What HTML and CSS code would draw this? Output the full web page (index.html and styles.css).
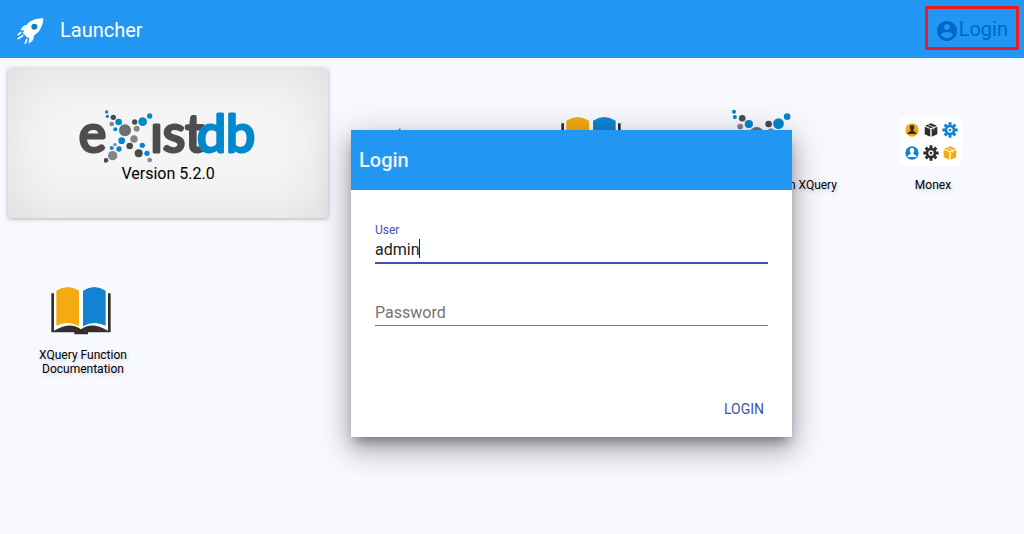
FILE: index.html
```html
<!DOCTYPE html>
<html lang="en">
    <head>
        <meta charset="utf-8">
        <title>Launcher</title>
        <meta name="viewport" content="width=device-width, initial-scale=1.0">
        <link rel="stylesheet" href="styles.css">
    </head>
    <body>
        <!-- shared shapes -->
        <svg class="defs" aria-hidden="true">
            <symbol id="dots" viewBox="133 40 147 165">
                <g fill="#0088cf">
                    <circle cx="141" cy="49" r="5"/><circle cx="143" cy="62" r="5"/><circle cx="177" cy="79" r="10"/>
                    <circle cx="167" cy="101" r="6"/><circle cx="186" cy="135" r="10"/><circle cx="156" cy="157" r="6"/>
                    <circle cx="178" cy="160" r="8"/><circle cx="249" cy="78" r="13"/><circle cx="270" cy="61" r="8"/>
                    <circle cx="248" cy="149" r="8"/><circle cx="262" cy="173" r="8"/>
                </g>
                <g fill="#4a4a4c">
                    <circle cx="161" cy="65" r="8"/><circle cx="225" cy="79" r="8"/><circle cx="210" cy="151" r="10"/>
                    <circle cx="237" cy="173" r="12"/><circle cx="139" cy="194" r="7"/>
                </g>
                <g fill="#858587">
                    <circle cx="156" cy="85" r="7"/><circle cx="231" cy="99" r="9"/><circle cx="223" cy="130" r="11"/>
                    <circle cx="166" cy="147" r="5"/><circle cx="159" cy="180" r="14"/><circle cx="270" cy="193" r="7"/>
                </g>
                <circle cx="196" cy="104" r="18" fill="#6d6e70"/>
            </symbol>
            <symbol id="book" viewBox="90 40 186 165">
                <path fill="#fff" d="M104 64q36-24 74 0h8q38-24 76 0v112q-45-2-79 10-34-12-79-10z"/>
                <path fill="#f4ab11" d="M109 63q34-22 68 0v107q-34-19-68-2z"/>
                <path fill="#1283d1" d="M189 63q34-22 68 0v105q-34-17-68 2z"/>
                <path fill="#332f31" d="M94 71h8v112q50-29 81-4 31-25 81 4V71h8v117h-68v6h-41v-6H94z"/>
            </symbol>
            <symbol id="gear" viewBox="-24 -24 48 48">
                <circle r="12" fill="none" stroke="currentColor" stroke-width="8"/>
                <circle r="4" fill="currentColor"/>
                <path stroke="currentColor" stroke-width="9" d="M0-23v8M0 15v8M-23 0h8M15 0h8M-16-16l6 6M10 10l6 6M-16 16l6-6M10-10l6-6"/>
            </symbol>
            <symbol id="cube" viewBox="-20 -20 40 40">
                <path fill="currentColor" d="M0-19l17 7L0-5l-17-7zM-18-9l16 6v22l-16-7zM18-9L2-3v22l16-7z"/>
                <path fill="none" stroke="#fff" stroke-width="2" d="M-9-15L8-8v7"/>
            </symbol>
            <symbol id="user" viewBox="-21 -21 42 42">
                <circle r="20" fill="currentColor"/>
                <path class="person" d="M-7-8a7 7 0 0 1 14 0c0 5-3 6-3 10 2 3 9 3 10 10h-28c1-7 8-7 10-10 0-4-3-5-3-10z"/>
            </symbol>
        </svg>

        <header class="toolbar">
            <svg class="rocket" viewBox="50 50 84 84" aria-hidden="true">
                <path fill="#fff" d="M132 54c-20 0-40 6-49 19-9 1-16 7-20 17l12 0-5 9c6 4 11 9 14 14l5-3-1 20c9-5 17-13 15-24 17-9 28-28 29-52z"/>
                <path fill="none" stroke="#fff" stroke-width="5" stroke-linecap="round" d="M64 97l-7 6M70 106l-13 9M82 118l-4 11"/>
                <circle cx="105" cy="79" r="9" fill="#0b84c9"/>
            </svg>
            <h1 class="title">Launcher</h1>
            <a class="login-link" href="#login">
                <svg class="account" viewBox="0 0 24 24" aria-hidden="true">
                    <path fill="currentColor" d="M12 2C6.480 2 2 6.480 2 12s4.480 10 10 10 10-4.480 10-10S17.520 2 12 2zm0 3c1.660 0 3 1.340 3 3s-1.340 3-3 3-3-1.340-3-3 1.340-3 3-3zm0 14.200c-2.500 0-4.710-1.280-6-3.220.03-1.990 4-3.080 6-3.080 1.990 0 5.970 1.090 6 3.080-1.290 1.940-3.500 3.220-6 3.220z"/>
                </svg>
                <span>Login</span>
            </a>
        </header>

        <main class="launcher">
            <section class="version-card">
                <svg class="logo" viewBox="58 40 534 165" role="img" aria-label="eXistdb">
                    <g class="logo-text">
                        <text class="grey" x="57" y="168">e</text>
                        <text class="grey" x="272" y="168">ıst</text>
                        <text class="blue" x="412" y="168">db</text>
                    </g>
                    <use href="#dots" x="133" y="40" width="147" height="165"/>
                </svg>
                <div>Version 5.2.0</div>
            </section>
            <a class="app" href="#">
                <svg class="app-icon" viewBox="0 0 64 64"><path fill="#1283d1" d="M10 20l11 30-5 4-9-30z"/></svg>
                <span>eXide - XQuery IDE</span>
            </a>
            <a class="app" href="#">
                <svg class="app-icon"><use href="#book" x="0" y="5" width="62" height="55"/></svg>
                <span>eXist-db Documentation</span>
            </a>
            <a class="app" href="#">
                <svg class="app-icon"><use href="#dots" x="0" y="0" width="62" height="68"/></svg>
                <span>Markdown Parser in XQuery</span>
            </a>
            <a class="app" href="#">
                <svg class="app-icon" viewBox="1 0 64 64">
                    <rect y="8" width="64" height="50" rx="8" fill="#fff"/>
                    <use class="orange dark-person" href="#user" x="6" y="15" width="14" height="14"/>
                    <use class="dark" href="#cube" x="25" y="15" width="14" height="14"/>
                    <use class="sky" href="#gear" x="43" y="14" width="16" height="16"/>
                    <use class="sky light-person" href="#user" x="6" y="38" width="14" height="14"/>
                    <use class="dark" href="#gear" x="24" y="37" width="16" height="16"/>
                    <use class="orange" href="#cube" x="44" y="38" width="14" height="14"/>
                </svg>
                <span>Monex</span>
            </a>
            <a class="app" href="#">
                <svg class="app-icon"><use href="#book" x="0" y="5" width="62" height="55"/></svg>
                <span>XQuery Function Documentation</span>
            </a>
        </main>

        <form class="dialog" id="login" role="dialog" aria-labelledby="dialog-title" onsubmit="return false">
            <h2 class="dialog-title" id="dialog-title">Login</h2>
            <div class="dialog-body">
                <div class="field focused">
                    <label for="user-name">User</label>
                    <input type="text" id="user-name" value="admin">
                    <span class="caret"></span>
                </div>
                <div class="field">
                    <input type="password" id="password" placeholder="Password" aria-label="Password">
                </div>
            </div>
            <div class="buttons">
                <button type="submit">LOGIN</button>
            </div>
        </form>
    </body>
</html>
```
FILE: styles.css
```css
* {
    box-sizing: border-box;
}
body {
    margin: 0;
    min-height: 100vh;
    background-color: #f8f9ff;
    color: #000;
    font-family: Roboto, sans-serif;
    font-size: 16px;
    line-height: 20px;
}
.defs {
    position: absolute;
    width: 0;
    height: 0;
}
.toolbar {
    display: flex;
    align-items: center;
    height: 58px;
    padding: 0 5px 0 16px;
    background-color: #2196f3;
}
.rocket {
    width: 28px;
    height: 28px;
    margin-top: 4px;
}
.title {
    flex: 1;
    margin: 2px 0 0 16px;
    color: #fff;
    font-size: 20px;
    font-weight: 400;
    line-height: 24px;
}
.login-link {
    display: flex;
    align-items: center;
    height: 44px;
    margin-bottom: 2px;
    padding: 2px 8px 0 7px;
    border: solid 3px #ed1c24;
    color: #0066cc;
    font-size: 20px;
    line-height: 24px;
    text-decoration: none;
}
.account {
    width: 24px;
    height: 24px;
    margin-top: 4px;
}
.launcher {
    display: grid;
    grid-template-columns: repeat(auto-fill, 150px);
    grid-auto-rows: 150px;
    gap: 20px;
    padding: 10px 8px;
}
.version-card {
    grid-column: span 2;
    padding-top: 41px;
    border-radius: 4px;
    background-color: #f5f5f5;
    box-shadow: inset 0 0 60px rgba(0, 0, 0, 0.1), 0 1px 4px rgba(0, 0, 0, 0.3);
    text-align: center;
}
.logo {
    display: block;
    width: 178px;
    height: 55px;
    margin: 0 auto;
    overflow: visible;
}
.logo-text {
    font-family: Lato, sans-serif;
    font-size: 156px;
    font-weight: 400;
    stroke-width: 9px;
    stroke-linejoin: round;
}
.grey {
    fill: #4d4d4f;
    stroke: #4d4d4f;
}
.blue {
    fill: #0088cf;
    stroke: #0088cf;
}
.app {
    display: flex;
    flex-direction: column;
    align-items: center;
    gap: 6px;
    padding-top: 40px;
    color: #000;
    font-size: 12px;
    line-height: 14px;
    text-align: center;
    text-decoration: none;
    text-shadow: 1px 2px 4px rgba(0, 0, 0, 0.2);
}
.app span {
    max-width: 150px;
}
.app:last-child span {
    max-width: 100px;
}
.app-icon {
    width: 64px;
    height: 64px;
    margin-right: 2px;
}
.dark {
    color: #2f2d2e;
}
.orange {
    color: #f4ab11;
}
.sky {
    color: #1283d1;
}
.dark-person {
    fill: #2f2d2e;
}
.light-person {
    fill: #fff;
}
.dialog {
    position: absolute;
    top: 130px;
    left: 351px;
    width: 441px;
    background-color: #fff;
    box-shadow: 0 16px 24px 2px rgba(0, 0, 0, 0.14),
                0 6px 30px 5px rgba(0, 0, 0, 0.16),
                0 8px 12px -4px rgba(0, 0, 0, 0.4);
}
.dialog-title {
    margin: 0;
    padding: 18px 8px;
    background-color: #2196f3;
    color: #f0f0f0;
    font-size: 20px;
    font-weight: 500;
    line-height: 24px;
}
.dialog-body {
    display: flex;
    flex-direction: column;
    gap: 37px;
    padding: 32px 24px;
}
.field {
    position: relative;
    border-bottom: solid 1px #757575;
}
.focused {
    border-bottom: solid 2px #3f51b5;
}
.field label {
    display: block;
    color: #3f51b5;
    font-size: 12px;
    line-height: 16px;
}
.field input {
    display: block;
    width: 100%;
    height: 24px;
    margin: 0;
    padding: 0 0 2px;
    border: 0;
    outline: 0;
    background: none;
    color: #212121;
    font: inherit;
}
.field input::placeholder {
    color: #737373;
}
.caret {
    position: absolute;
    bottom: 4px;
    left: 44px;
    width: 1px;
    height: 19px;
    background-color: #212121;
}
.buttons {
    display: flex;
    justify-content: flex-end;
    padding: 33px 20px 10px;
}
.buttons button {
    height: 36px;
    padding: 0 8px;
    border: 0;
    background: none;
    color: #3f51b5;
    font: inherit;
    font-size: 14px;
}
```
